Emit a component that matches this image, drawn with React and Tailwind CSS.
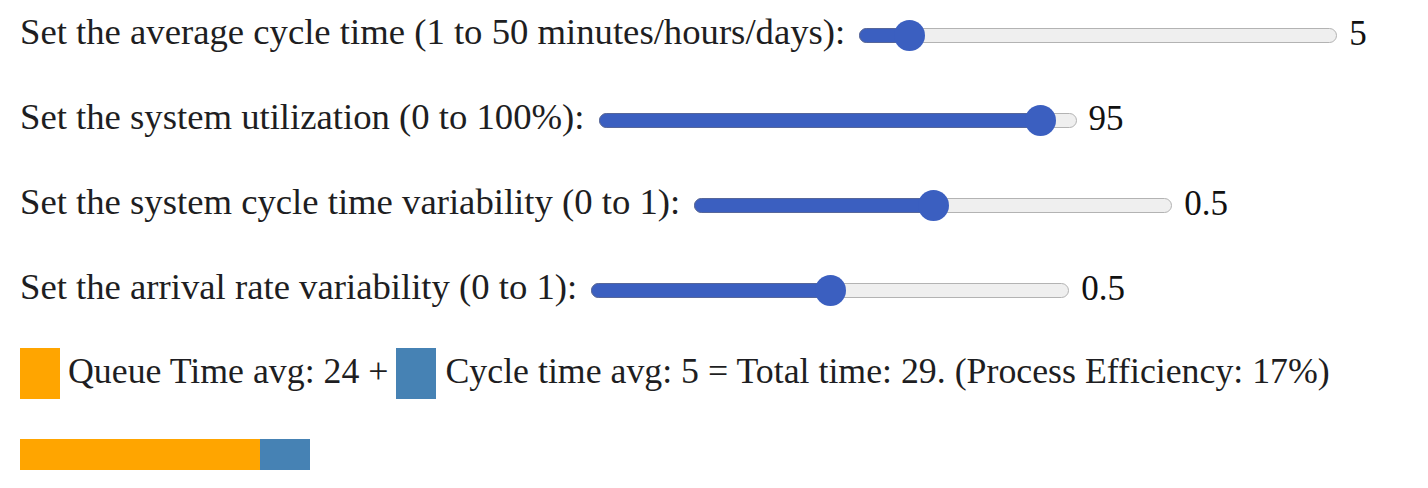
import React from "react";

const sliders = [
  { label: "Set the average cycle time (1 to 50 minutes/hours/days):", min: 1, max: 50, value: 5, shown: "5" },
  { label: "Set the system utilization (0 to 100%):", min: 0, max: 100, value: 95, shown: "95" },
  { label: "Set the system cycle time variability (0 to 1):", min: 0, max: 1, value: 0.5, shown: "0.5" },
  { label: "Set the arrival rate variability (0 to 1):", min: 0, max: 1, value: 0.5, shown: "0.5" },
];

const TRACK_W = 478;

const Slider = ({ min, max, value }) => {
  const f = (value - min) / (max - min);
  const center = 14 + f * (TRACK_W - 28);

  return (
    <div className="relative flex h-[31px] w-[478px] items-center">
      <div className="relative h-[15px] w-full rounded-full border border-[#b3b3b3] bg-[#efefef]">
        <div
          className="absolute -left-px -top-px -bottom-px rounded-full border border-[#56669a] bg-[#3b5fc0]"
          style={{ width: center + 1 }}
        />
      </div>
      <div
        className="absolute top-0 h-[31px] w-[31px] rounded-full bg-[#3b5fc0]"
        style={{ left: center - 15.5 }}
      />
    </div>
  );
};

export default function App() {
  const queue = 24;
  const cycle = 5;

  return (
    <div className="bg-white min-h-screen pl-5 pt-[10px] text-[#1e1e22] font-['Liberation_Serif',serif]">
      <div className="flex flex-col gap-[35px]">
        {sliders.map((s, i) => (
          <div key={i} className="flex h-[50px] items-center">
            <span className="mb-[6px] text-[36.7px] leading-none whitespace-nowrap">
              {s.label}
            </span>
            <div className="ml-[14px]">
              <Slider min={s.min} max={s.max} value={s.value} />
            </div>
            <span className="ml-[12px] mb-[4px] text-[35px] leading-none text-[#111]">
              {s.shown}
            </span>
          </div>
        ))}
      </div>

      {/* Legend */}
      <div className="mt-[33px] flex h-[51px] items-center text-[35.8px] leading-none whitespace-nowrap">
        <div className="h-[51px] w-[40px] bg-[#ffa500]" />
        <span className="ml-[8px] mb-[4px]">Queue Time avg: {queue} +</span>
        <div className="ml-[8px] h-[51px] w-[40px] bg-[#4682b4]" />
        <span className="ml-[9px] mb-[4px]">
          Cycle time avg: {cycle} = Total time: {queue + cycle}. (Process Efficiency: 17%)
        </span>
      </div>

      {/* Stacked bar */}
      <div className="mt-[40px] flex h-[31px]">
        <div className="h-full bg-[#ffa500]" style={{ width: queue * 10 }} />
        <div className="h-full bg-[#4682b4]" style={{ width: cycle * 10 }} />
      </div>
    </div>
  );
}
